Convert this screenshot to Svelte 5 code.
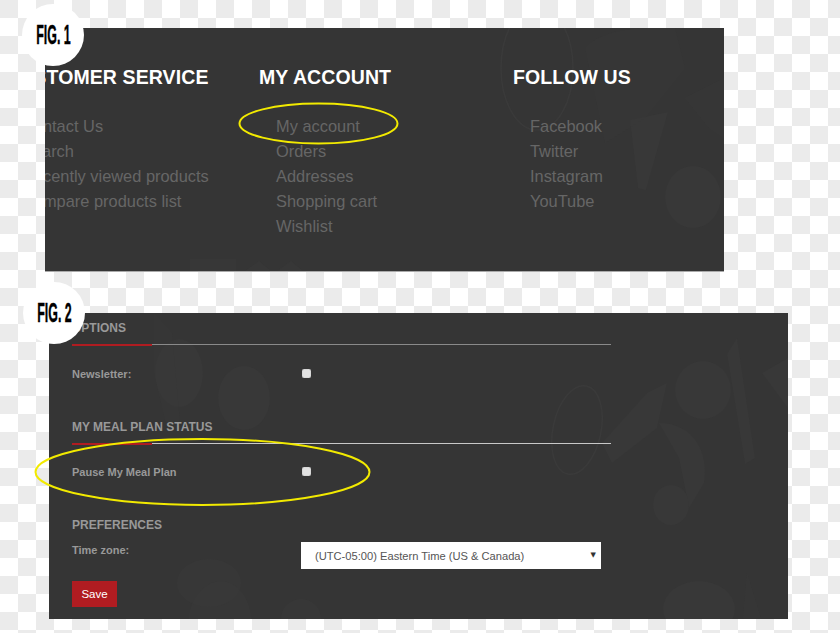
<script>
  const columns = [
    { title: 'CUSTOMER SERVICE', links: ['Contact Us', 'Search', 'Recently viewed products', 'Compare products list'] },
    { title: 'MY ACCOUNT', links: ['My account', 'Orders', 'Addresses', 'Shopping cart', 'Wishlist'] },
    { title: 'FOLLOW US', links: ['Facebook', 'Twitter', 'Instagram', 'YouTube'] }
  ];
</script>

<div class="page">
  <section class="panel footer-panel">
    <svg class="mark" viewBox="0 0 679 243" aria-hidden="true">
      <ellipse cx="648" cy="169" rx="28" ry="31" />
      <path d="M585 92l38 -8 -22 78 -8 -2z" />
      <path d="M540 20c20-20 50-20 90-20l10 40-40 50-40 25z" opacity=".5" />
      <path d="M640 70l39-20v60l-15-10z" opacity=".7" />
      <ellipse cx="492" cy="40" rx="36" ry="62" class="ring" />
      <path d="M145 243v-12h46v12zM200 243l14-10 12 10zM232 243l14-10 12 10z" opacity=".6" />
    </svg>
    <div class="columns">
      {#each columns as column}
        <div class="column">
          <h3>{column.title}</h3>
          <ul>
            {#each column.links as link}
              <li>{link}</li>
            {/each}
          </ul>
        </div>
      {/each}
    </div>
  </section>

  <section class="panel form-panel">
    <svg class="mark" viewBox="0 0 739 306" aria-hidden="true">
      <ellipse cx="130" cy="60" rx="24" ry="34" />
      <ellipse cx="195" cy="85" rx="26" ry="32" />
      <path d="M105 0l18 20 8 90 -12 10-14-60z" opacity=".5" />
      <ellipse cx="160" cy="270" rx="32" ry="24" opacity=".6" />
      <ellipse cx="528" cy="117" rx="24" ry="45" class="ring" transform="rotate(12 528 117)" />
      <path d="M553 130l45-50 20-10-10 45-45 35z" />
      <ellipse cx="654" cy="77" rx="28" ry="29" />
      <path d="M688 25l18 120-10 6-18-110z" />
      <path d="M610 110c35 0 50 30 45 60l-15 25-10-50z" />
      <ellipse cx="622" cy="192" rx="18" ry="20" />
      <path d="M713 60l26-15v50z" />
      <ellipse cx="650" cy="296" rx="36" ry="28" />
      <path d="M698 260l14 46h-18z" opacity=".7" />
      <path d="M140 306c0-18 15-38 32-38s30 20 30 38z" opacity=".6" />
      <path d="M232 306c0-12 10-20 20-20s20 8 20 20z" opacity=".6" />
    </svg>
    <div class="form">
      <h4>OPTIONS</h4>
      <div class="rule"></div>
      <div class="row newsletter">
        <label for="newsletter">Newsletter:</label>
        <input id="newsletter" type="checkbox" />
      </div>

      <h4 class="status-title">MY MEAL PLAN STATUS</h4>
      <div class="rule bright"></div>
      <div class="row pause">
        <label for="pause">Pause My Meal Plan</label>
        <input id="pause" type="checkbox" />
      </div>

      <h4 class="prefs-title">PREFERENCES</h4>
      <div class="row zone">
        <label for="zone">Time zone:</label>
        <div class="select-wrap">
          <select id="zone">
            <option>(UTC-05:00) Eastern Time (US &amp; Canada)</option>
          </select>
        </div>
      </div>
      <button type="button">Save</button>
    </div>
  </section>

  <div class="badge one"><span>FIG. 1</span></div>
  <div class="badge two"><span>FIG. 2</span></div>

  <svg class="rings" viewBox="0 0 840 633" aria-hidden="true">
    <ellipse cx="318.5" cy="123.5" rx="79" ry="20" />
    <ellipse cx="202.5" cy="472" rx="167" ry="33" />
  </svg>
</div>

<style>
  :global(body) { margin: 0; }
  .page {
    position: relative;
    width: 840px;
    height: 633px;
    overflow: hidden;
    box-sizing: border-box;
    padding: 28px 0 0 45px;
    font-family: "Liberation Sans", Arial, sans-serif;
    background-color: #fff;
    background-image:
      conic-gradient(#fff 25%, #ebebeb 0 50%, #fff 0 75%, #ebebeb 0);
    background-size: 36px 36px;
  }
  .panel { position: relative; background: #353535; overflow: hidden; }
  .mark { position: absolute; inset: 0; width: 100%; height: 100%; fill: #383838; }
  .mark .ring { fill: none; stroke: #3a3a3a; stroke-width: 1.5; }

  .footer-panel { width: 679px; height: 243px; box-shadow: 0 1px 0 #aaa; }
  .columns { position: relative; display: flex; margin-left: -40px; padding-top: 37px; }
  .column { width: 254px; flex: none; }
  h3 { margin: 0; font-size: 19.5px; line-height: 24px; font-weight: 700; color: #fff; letter-spacing: .1px; white-space: nowrap; }
  ul { list-style: none; margin: 25px 0 0; padding: 0 0 0 17px; color: #666; font-size: 16.4px; line-height: 25.1px; white-space: nowrap; }

  .form-panel { width: 739px; height: 306px; margin: 42px 0 0 4px; }
  .form { position: relative; width: 539px; padding: 8px 0 0 23px; color: #999; }
  h4 { margin: 0; font-size: 12px; line-height: 14px; font-weight: 700; color: #999; }
  .rule { position: relative; height: 1px; margin-top: 9px; background: #8a8a8a; }
  .rule::before { content: ''; position: absolute; left: 0; top: 0; width: 80px; height: 2px; background: #b01c21; }
  .rule.bright { background: #c8c8c8; }
  .row { display: flex; align-items: center; font-size: 11px; font-weight: 700; }
  label { width: 229px; flex: none; }
  input { appearance: none; width: 9px; height: 9px; margin: 0 0 0 1px; background: #e2e2e2; border-radius: 2px; box-shadow: inset 0 0 1px #888; }
  .newsletter { margin-top: 22px; height: 13px; }
  .status-title { margin-top: 40px; }
  .pause { margin-top: 21px; height: 13px; }
  .prefs-title { margin-top: 40px; }
  .zone { margin-top: 10px; align-items: flex-start; }
  .zone label { padding-top: 2px; }
  .select-wrap { position: relative; width: 300px; height: 27px; background: #fff; }
  .select-wrap::after { content: '▼'; position: absolute; right: 5px; top: 8px; font-size: 7px; line-height: 10px; color: #333; font-family: "DejaVu Sans", sans-serif; }
  select {
    appearance: none;
    display: block;
    width: 100%;
    height: 27px;
    border: 0;
    border-radius: 0;
    padding: 0 0 0 14px;
    background: transparent;
    color: #555;
    font: 400 11.15px "Liberation Sans", Arial, sans-serif;
  }
  button {
    display: block;
    width: 45px;
    height: 26px;
    margin-top: 12px;
    padding: 0;
    border: 0;
    background: #b01c21;
    color: #fff;
    font: 400 11.5px "Liberation Sans", Arial, sans-serif;
  }

  .badge {
    position: absolute;
    width: 62px;
    height: 62px;
    border-radius: 50%;
    background: #fff;
    display: flex;
    align-items: center;
    justify-content: center;
    white-space: nowrap;
  }
  .badge.one { left: 22px; top: 4px; }
  .badge.two { left: 23px; top: 282px; }
  .badge span {
    display: block;
    flex: none;
    color: #000;
    font-size: 27px;
    font-weight: 700;
    -webkit-text-stroke: .4px #000;
    transform: scaleX(.46);
  }
  .rings { position: absolute; inset: 0; width: 840px; height: 633px; pointer-events: none; }
  .rings ellipse { fill: none; stroke: #f2ea00; stroke-width: 2; }
</style>
